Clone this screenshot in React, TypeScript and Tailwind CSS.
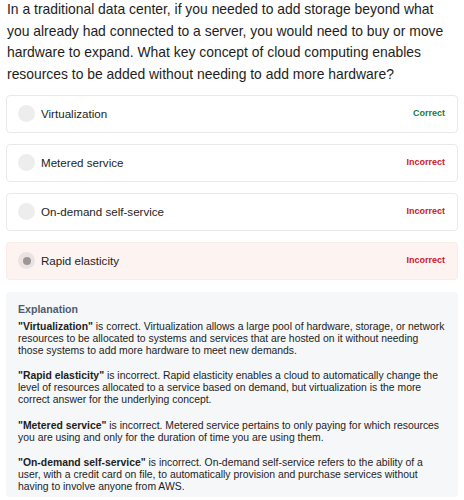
import React from "react";

const options = [
  { label: "Virtualization", status: "Correct", selected: false },
  { label: "Metered service", status: "Incorrect", selected: false },
  { label: "On-demand self-service", status: "Incorrect", selected: false },
  { label: "Rapid elasticity", status: "Incorrect", selected: true },
];

const explanations: { b: string; lines: string[] }[] = [
  {
    b: "\"Virtualization\"",
    lines: [
      " is correct. Virtualization allows a large pool of hardware, storage, or network",
      "resources to be allocated to systems and services that are hosted on it without needing",
      "those systems to add more hardware to meet new demands.",
    ],
  },
  {
    b: "\"Rapid elasticity\"",
    lines: [
      " is incorrect. Rapid elasticity enables a cloud to automatically change the",
      "level of resources allocated to a service based on demand, but virtualization is the more",
      "correct answer for the underlying concept.",
    ],
  },
  {
    b: "\"Metered service\"",
    lines: [
      " is incorrect. Metered service pertains to only paying for which resources",
      "you are using and only for the duration of time you are using them.",
    ],
  },
  {
    b: "\"On-demand self-service\"",
    lines: [
      " is incorrect. On-demand self-service refers to the ability of a",
      "user, with a credit card on file, to automatically provision and purchase services without",
      "having to involve anyone from AWS.",
    ],
  },
];

const question = [
  "In a traditional data center, if you needed to add storage beyond what",
  "you already had connected to a server, you would need to buy or move",
  "hardware to expand. What key concept of cloud computing enables",
  "resources to be added without needing to add more hardware?",
];

export default function App() {
  return (
    <div
      className="w-[464px] h-[500px] overflow-hidden bg-white text-[#1f1f1f]"
      style={{ fontFamily: "'Liberation Sans', Arial, sans-serif" }}
    >
      <p className="mt-[-1px] pl-[7px] text-[13.9px] leading-[21.7px] text-[#1d1d1d] whitespace-nowrap">
        {question.map((l, i) => (
          <span key={i} className="block">
            {l}
          </span>
        ))}
      </p>
      <div className="mt-[9px] mx-[6px] flex flex-col gap-[11px]">
        {options.map((o) => (
          <div
            key={o.label}
            className={`h-[38px] rounded-[4px] border flex items-center pl-[11px] pr-[12px] ${
              o.selected ? "bg-[#fdf3f1] border-[#f8ebe8]" : "bg-white border-[#e9e9e9]"
            }`}
          >
            <div
              className={`w-[17px] h-[17px] rounded-full flex items-center justify-center ${
                o.selected ? "bg-[#ebe3e2]" : "bg-[#ededed]"
              }`}
            >
              {o.selected && <div className="w-[8px] h-[8px] rounded-full bg-[#9d9697]" />}
            </div>
            <span className="ml-[6px] text-[11.6px] text-[#1d1d1d]">{o.label}</span>
            <span
              className={`ml-auto text-[9px] font-bold ${
                o.status === "Correct" ? "text-[#187a3d]" : "text-[#d3141c]"
              }`}
            >
              {o.status}
            </span>
          </div>
        ))}
      </div>
      <div className="mt-[12px] mx-[6px] h-[205px] rounded-[4px] bg-[#f6f7f9] pl-[12px] pr-[8px] pt-[10px]">
        <div className="text-[10.6px] font-bold text-[#4d5c70] leading-[14px]">Explanation</div>
        <div className="mt-[5px] flex flex-col gap-[13.5px]">
          {explanations.map((e) => (
            <p key={e.b} className="text-[10.4px] leading-[12px] text-[#1d1d1d] whitespace-nowrap">
              {e.lines.map((l, i) => (
                <span key={i} className="block">
                  {i === 0 && <b className="font-bold">{e.b}</b>}
                  {l}
                </span>
              ))}
            </p>
          ))}
        </div>
      </div>
    </div>
  );
}
